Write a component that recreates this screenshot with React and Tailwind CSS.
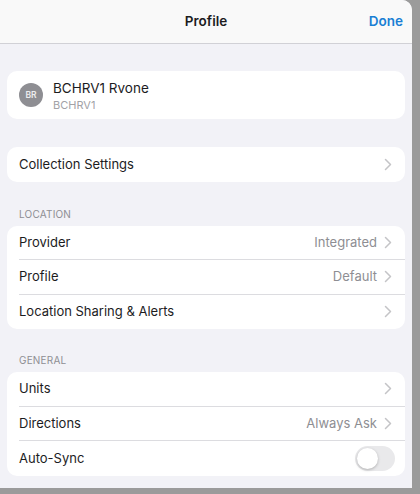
import { useState } from "react";

const Chevron = () => (
  <svg width="8" height="13" viewBox="0 0 8 13" className="ml-[7px] shrink-0">
    <path
      d="M1.5 1.5 L6.5 6.5 L1.5 11.5"
      fill="none"
      stroke="#c4c4c7"
      strokeWidth="1.5"
      strokeLinecap="round"
      strokeLinejoin="round"
    />
  </svg>
);

const Row = ({ label, value, last, children }) => (
  <div className="flex h-[34.5px] items-stretch pl-3">
    <div
      className={`flex flex-1 items-center pr-[13px] ${
        last ? "" : "border-b border-[#dcdce0]"
      }`}
    >
      <span className="flex-1 text-[13px] text-[#1c1c1e]">{label}</span>
      {value && <span className="text-[13px] text-[#8e8e93]">{value}</span>}
      {children || <Chevron />}
    </div>
  </div>
);

const SectionHeader = ({ title }) => (
  <div className="px-3 pb-[5px] text-[10px] leading-[13px] tracking-[0.2px] text-[#8e8e93]">
    {title}
  </div>
);

const Toggle = ({ on, setOn }) => (
  <button
    onClick={() => setOn(!on)}
    className={`relative -mr-[3px] h-[25px] w-[40px] rounded-full ${
      on ? "bg-[#34c759]" : "bg-[#e9e9eb]"
    }`}
  >
    <span
      className={`absolute top-[2px] h-[21px] w-[21px] rounded-full bg-white shadow-[0_1px_3px_rgba(0,0,0,0.25)] ${
        on ? "left-[17px]" : "left-[2px]"
      }`}
    />
  </button>
);

export default function App() {
  const [autoSync, setAutoSync] = useState(false);

  return (
    <div
      className="h-[494px] w-[420px] overflow-hidden bg-[#9b9b9b]"
      style={{ fontFamily: "Inter, 'Liberation Sans', sans-serif" }}
    >
      <div className="h-[488px] w-[412px] overflow-hidden rounded-tr-[10px] bg-[#f2f2f7]">
        {/* Nav bar */}
        <div className="relative flex h-[44px] items-center justify-center border-b border-[#d1d1d6] bg-[#f9f9f9]">
          <span className="text-[13.5px] font-semibold text-[#1c1c1e]">
            Profile
          </span>
          <button className="absolute right-[9px] text-[13.5px] font-semibold text-[#1a7fd4]">
            Done
          </button>
        </div>

        <div className="px-[7px]">
          {/* User card */}
          <div className="mt-[27px] flex h-[48px] items-center rounded-[10px] bg-white pl-3">
            <div className="flex h-[24px] w-[24px] items-center justify-center rounded-full bg-[#8e8e93] text-[8.5px] font-semibold text-[#ececee]">
              BR
            </div>
            <div className="ml-[10px] flex flex-col pt-[1px]">
              <span className="text-[13.5px] leading-[18px] text-[#1c1c1e]">
                BCHRV1 Rvone
              </span>
              <span className="text-[11px] leading-[16px] text-[#a2a2a7]">
                BCHRV1
              </span>
            </div>
          </div>

          {/* Collection settings */}
          <div className="mt-[28px] overflow-hidden rounded-[10px] bg-white">
            <Row label="Collection Settings" last />
          </div>

          <div className="mt-[26px]">
            <SectionHeader title="LOCATION" />
            <div className="overflow-hidden rounded-[10px] bg-white">
              <Row label="Provider" value="Integrated" />
              <Row label="Profile" value="Default" />
              <Row label="Location Sharing & Alerts" last />
            </div>
          </div>

          <div className="mt-[25px]">
            <SectionHeader title="GENERAL" />
            <div className="overflow-hidden rounded-[10px] bg-white">
              <Row label="Units" />
              <Row label="Directions" value="Always Ask" />
              <Row label="Auto-Sync" last>
                <Toggle on={autoSync} setOn={setAutoSync} />
              </Row>
            </div>
          </div>
        </div>
      </div>
    </div>
  );
}
